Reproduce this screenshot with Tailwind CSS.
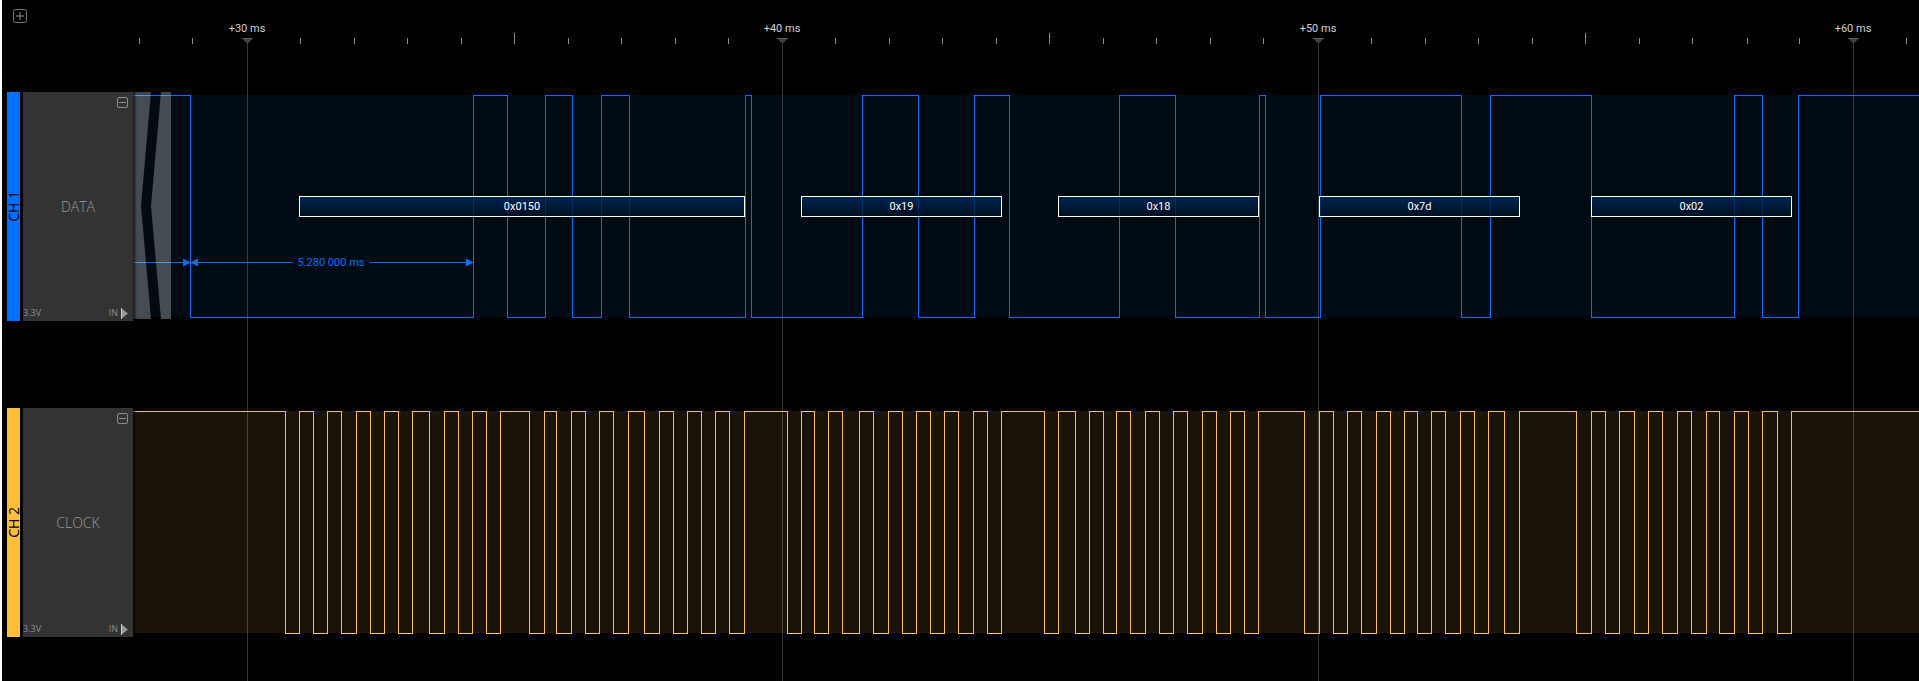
<!DOCTYPE html>
<html lang="en">
<head>
<meta charset="utf-8">
<title>Logic analyzer capture</title>
<script src="https://cdn.jsdelivr.net/npm/@tailwindcss/browser@4"></script>
</head>
<body class="bg-black">
<main class="relative flex min-h-screen flex-col overflow-hidden border-l-2 border-white bg-black font-['Open_Sans','Noto_Sans',sans-serif]">
  <svg id="grid" class="pointer-events-none absolute inset-0 size-full" shape-rendering="crispEdges" aria-hidden="true"></svg>

  <header class="relative flex h-[92px]">
    <div class="w-[131px] shrink-0 pt-[9px] pl-[11px]">
      <button type="button" aria-label="Add channel" class="block text-[#7a7a7a]">
        <svg class="size-3.5" viewBox="0 0 14 14" fill="none" stroke="currentColor"><rect x=".5" y=".5" width="13" height="13" rx="2"/><path d="M7 3v8M3 7h8" stroke="#6a6a6a" stroke-width="1.4"/></svg>
      </button>
    </div>
    <svg id="ruler" class="h-full min-w-0 flex-1 overflow-visible font-['Roboto',sans-serif] text-[11px]" fill="#d0d0d0"></svg>
  </header>

  <section class="relative flex h-[229px]" aria-label="Channel 1">
    <div class="ml-[5px] flex w-[13px] items-center justify-center bg-[#0070ff]">
      <span class="rotate-180 text-[14px] leading-[13px] whitespace-nowrap text-black [writing-mode:vertical-rl]">CH 1</span>
    </div>
    <div class="ml-[3px] flex w-[110px] shrink-0 flex-col justify-between bg-[#333] text-[#8c8c8c]">
      <div class="flex h-4 justify-end pt-[5px] pr-[5px]">
        <button type="button" aria-label="Collapse DATA" class="block size-[11px]"><svg class="size-[11px]" viewBox="0 0 11 11" fill="none" stroke="currentColor"><rect x=".5" y=".5" width="10" height="10" rx="1.5"/><path d="M2 5.500h7"/></svg></button>
      </div>
      <h2 class="text-center text-[14px] leading-5 font-light text-[#9a9a9a]">DATA</h2>
      <div class="flex h-4 items-center text-[9px] leading-3 text-[#8c8c8c]">
        <span>3.3V</span><span class="ml-auto">IN</span>
        <svg class="mr-[5px] ml-[3px] h-[11px] w-[7px]" viewBox="0 0 7 11"><path d="M0 0 7 5.500 0 11Z" fill="#999"/><path d="M.5 0v11" stroke="#ccc"/></svg>
      </div>
    </div>
    <svg id="data" class="h-full min-w-0 flex-1 font-['Roboto',sans-serif] text-[11px]"></svg>
  </section>

  <section class="relative mt-[87px] flex h-[229px]" aria-label="Channel 2">
    <div class="ml-[5px] flex w-[13px] items-center justify-center bg-[#ffbe37]">
      <span class="rotate-180 text-[14px] leading-[13px] whitespace-nowrap text-black [writing-mode:vertical-rl]">CH 2</span>
    </div>
    <div class="ml-[3px] flex w-[110px] shrink-0 flex-col justify-between bg-[#333] text-[#8c8c8c]">
      <div class="flex h-4 justify-end pt-[5px] pr-[5px]">
        <button type="button" aria-label="Collapse CLOCK" class="block size-[11px]"><svg class="size-[11px]" viewBox="0 0 11 11" fill="none" stroke="currentColor"><rect x=".5" y=".5" width="10" height="10" rx="1.5"/><path d="M2 5.500h7"/></svg></button>
      </div>
      <h2 class="text-center text-[14px] leading-5 font-light text-[#9a9a9a]">CLOCK</h2>
      <div class="flex h-4 items-center text-[9px] leading-3 text-[#8c8c8c]">
        <span>3.3V</span><span class="ml-auto">IN</span>
        <svg class="mr-[5px] ml-[3px] h-[11px] w-[7px]" viewBox="0 0 7 11"><path d="M0 0 7 5.500 0 11Z" fill="#999"/><path d="M.5 0v11" stroke="#ccc"/></svg>
      </div>
    </div>
    <svg id="clock" class="h-full min-w-0 flex-1"></svg>
  </section>
</main>
<script>
const ORIGIN = 133, END = 6000;
const X = x => x - ORIGIN;
const majors = [[247, '+30 ms'], [782, '+40 ms'], [1318, '+50 ms'], [1853, '+60 ms']];
const minors = [139,192,300,354,407,461,568,621,675,728,835,889,942,996,1103,1156,1210,1263,1371,1425,1478,1532,1639,1692,1747,1799,1906];
const halves = [514,1049,1585];

document.getElementById('grid').innerHTML = majors.map(([x]) =>
  `<line x1="${x - 1.5}" x2="${x - 1.5}" y1="43" y2="100%" stroke="#363636"/>`).join('');

document.getElementById('ruler').innerHTML =
  minors.map(x => `<rect x="${X(x)}" y="38" width="1" height="6" fill="#8a8a8a"/>`).join('') +
  halves.map(x => `<rect x="${X(x)}" y="33" width="1" height="11" fill="#8a8a8a"/>`).join('') +
  majors.map(([x, t]) => `<path d="M${X(x) - 5} 38h11l-5.500 6Z" fill="#404040"/><rect x="${X(x) - 5}" y="38" width="11" height="1" fill="#5c5c5c"/><text x="${X(x)}" y="32" text-anchor="middle">${t}</text>`).join('');

// Both signals start high and toggle at every listed edge.
function wave(edges, color) {
  let d = 'M0 3.5', high = true;
  for (const x of edges) {
    d += `H${X(x) + .5}`;
    high = !high;
    d += `V${high ? 3.5 : 225.5}`;
  }
  return `<path d="${d}H${END}" fill="none" stroke="${color}" shape-rendering="crispEdges"/>`;
}
const shade = id => `<defs><linearGradient id="${id}"><stop offset="0" stop-color="#000" stop-opacity=".7"/><stop offset="1" stop-color="#000" stop-opacity="0"/></linearGradient></defs><rect width="4" height="229" fill="url(#${id})"/>`;

const dataEdges = [190,473,507,545,572,601,629,745,751,862,918,974,1009,1119,1175,1259,1265,1320,1461,1490,1591,1734,1762,1798];
const clockEdges = [285,299,313,327,341,356,370,384,398,412,429,444,458,472,486,500,529,544,556,571,585,599,613,628,644,659,673,687,701,715,729,744,
  787,801,814,828,842,859,873,888,902,916,930,944,958,973,987,1001,1044,1058,1075,1089,1103,1116,1130,1145,1159,1173,1187,1202,1216,1230,1244,1258,
  1304,1319,1333,1347,1361,1376,1390,1404,1417,1431,1445,1460,1474,1488,1504,1519,1576,1591,1605,1619,1634,1648,1662,1677,1691,1706,1719,1734,1748,1762,1777,1791];
const frames = [[299,446,'0x0150'],[801,201,'0x19'],[1058,201,'0x18'],[1319,201,'0x7d'],[1591,201,'0x02']];

document.getElementById('data').innerHTML =
  `<defs><linearGradient id="frame" x2="0" y2="1"><stop offset="0" stop-color="#002c66"/><stop offset="1" stop-color="#001020"/></linearGradient></defs>
   <rect y="3" width="100%" height="222" fill="#0088fa" fill-opacity=".08"/>` +
  wave(dataEdges, '#0070ff') +
  `<path d="M0 170.5H57M57 170.5H160M237 170.5H340" stroke="#0070ff" shape-rendering="crispEdges"/>
   <path d="M50 166.500 57.500 170.500 50 174.500ZM65 166.500 57.500 170.500 65 174.500ZM333 166.500 340.500 170.500 333 174.500Z" fill="#0070ff"/>
   <text x="198" y="174" text-anchor="middle" fill="#0070ff">5.280 000 ms</text>
   <path d="M0 0H18L8 114 18 227H0ZM28 0H38V227H28L18 114Z" fill="#fff" fill-opacity=".27"/>` +
  frames.map(([x, w, t]) => `<rect x="${X(x) + .5}" y="104.5" width="${w - 1}" height="20" fill="url(#frame)" fill-opacity=".8" stroke="#fff"/><text x="${X(x) + w / 2}" y="118" text-anchor="middle" fill="#fff">${t}</text>`).join('') +
  shade('fadeData');

document.getElementById('clock').innerHTML =
  `<rect y="3" width="100%" height="222" fill="#ffbe40" fill-opacity=".1"/>` + wave(clockEdges, '#ffbe37') + shade('fadeClock');
</script>
</body>
</html>
